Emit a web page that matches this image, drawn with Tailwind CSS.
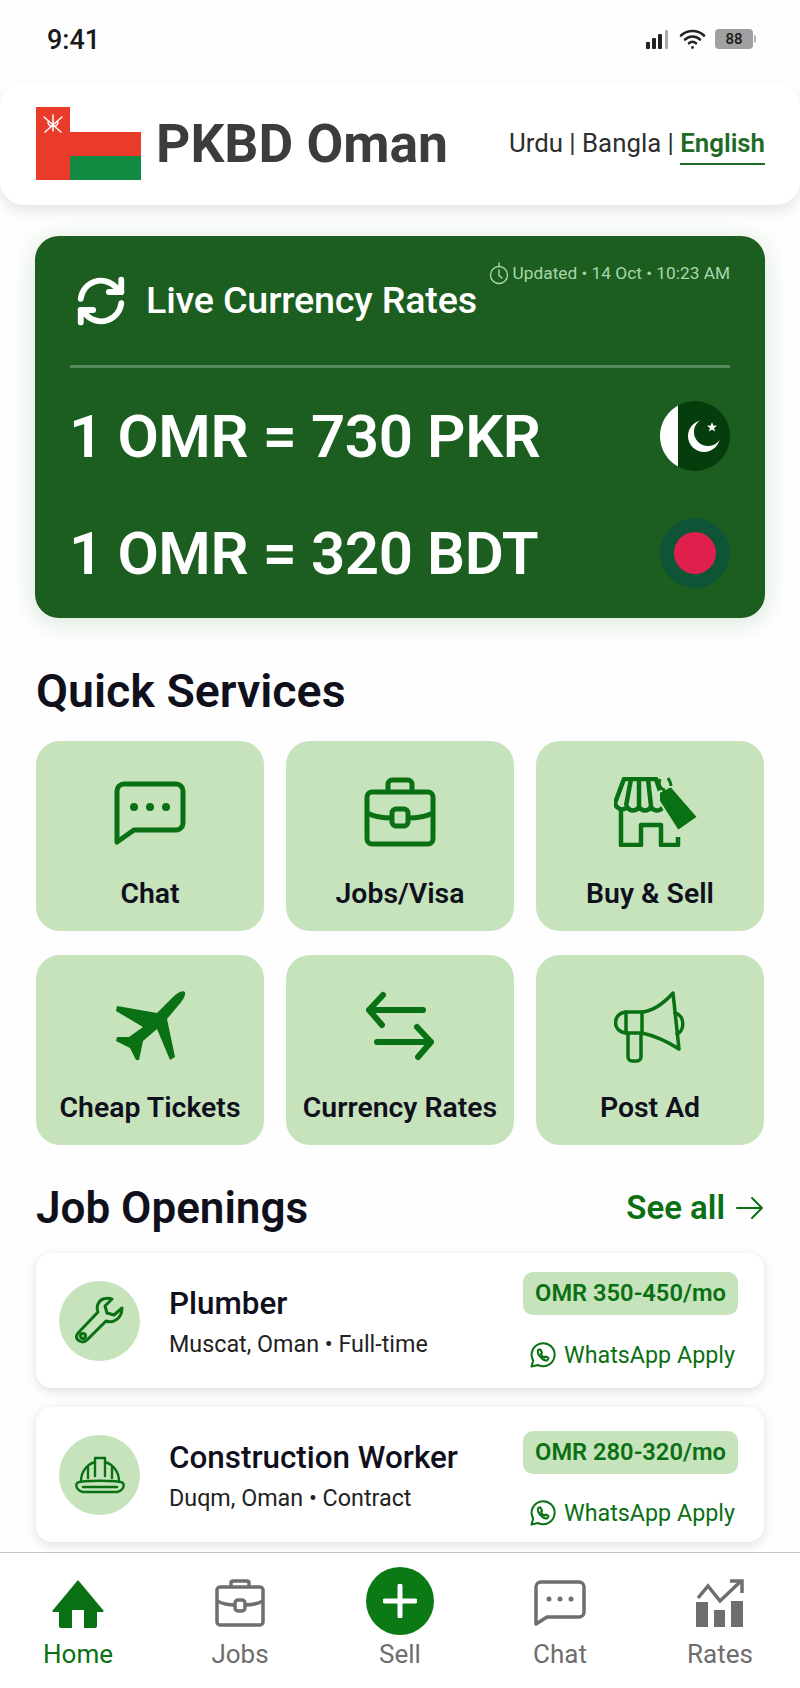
<!DOCTYPE html>
<html lang="en">

<head>
  <meta charset="UTF-8" />
  <meta name="viewport" content="width=device-width, initial-scale=1.0" />
  <title>PKBD Oman</title>
  <script src="https://cdn.jsdelivr.net/npm/@tailwindcss/browser@4"></script>
</head>

<body class="bg-[#fdfefd] font-['Roboto',sans-serif] text-[#10101c] antialiased">
  <div class="w-[800px] h-[1688px] overflow-hidden flex flex-col">

    <!-- Status bar -->
    <div class="h-[82px] shrink-0 flex items-start justify-between pl-[47px] pr-[44px] pt-[22px]">
      <span class="text-[27px] leading-[36px] font-medium text-[#1a1a1a]">9:41</span>
      <div class="flex items-center gap-[9px] mt-[6px]">
        <svg class="w-[25px] h-[20px]" viewBox="0 0 25 20" fill="#222">
          <rect x="1" y="13" width="4" height="7" rx="1" />
          <rect x="7" y="9" width="4" height="11" rx="1" />
          <rect x="13" y="5" width="4" height="15" rx="1" />
          <rect x="20" y="1" width="3" height="19" rx="1" fill="#aaa" />
        </svg>
        <svg class="w-[27px] h-[22px]" viewBox="0 0 26 22" fill="none" stroke="#222" stroke-width="2.6" stroke-linecap="round">
          <path d="M1.5 7.5C8 1.5 18 1.5 24.5 7.5" />
          <path d="M5.5 11.5c4.400-4 10.600-4 15 0" />
          <path d="M9.500 15.200c2.200-1.800 4.800-1.800 7 0" />
          <circle cx="13" cy="19.500" r="1.400" fill="#222" stroke="none" />
        </svg>
        <div class="flex items-center gap-[1px]">
          <div class="w-[38px] h-[20px] rounded-[4px] bg-[#a0a0a0] flex items-center justify-center text-[15px] font-medium text-[#1a1a1a]">88</div>
          <div class="w-[2px] h-[8px] rounded-r bg-[#b5b5b5]"></div>
        </div>
      </div>
    </div>

    <!-- App header -->
    <header class="h-[123px] shrink-0 bg-white rounded-[24px] shadow-[0_6px_14px_rgba(0,0,0,0.10)] flex items-center justify-between pl-[36px] pr-[35px]">
      <div class="flex items-center gap-[15px]">
        <svg class="w-[105px] h-[73px] mt-[-1px]" viewBox="0 0 105 73">
          <rect width="105" height="73" fill="#ea3b2a" />
          <rect x="34" width="71" height="25" fill="#fff" />
          <rect x="34" y="49" width="71" height="24" fill="#118a42" />
          <g stroke="#fff" stroke-width="1.500" fill="none" stroke-linecap="round">
            <path d="M8 10l17 15M26 10L9 25" />
            <path d="M17 8v16M12 15c0 6 10 6 10 0" />
          </g>
        </svg>
        <span class="text-[53.400px] leading-none font-bold text-[#3c3c3c]">PKBD Oman</span>
      </div>
      <div class="flex items-start text-[25.800px] leading-[36px] text-[#2e2e2e] mt-[2px]">
        <span class="whitespace-pre">Urdu | Bangla | </span>
        <span class="font-semibold text-[#1d6a25] border-b-2 border-[#1d6a25] pb-[2px]">English</span>
      </div>
    </header>

    <!-- Live rates -->
    <section class="h-[382px] shrink-0 mt-[31px] mx-[35px] bg-[#1b5e20] rounded-[24px] shadow-[0_4px_24px_rgba(27,94,32,0.16)] px-[35px] text-white">
      <div class="h-[132px] border-b-[3px] border-[#58895c] relative">
        <div class="absolute right-0 top-[25px] flex items-center gap-[4px] text-[17.300px] leading-[24px] text-[#a9d6ab]">
          <svg class="w-[20px] h-[23px]" viewBox="0 0 20 23" fill="none" stroke="#a9d6ab" stroke-width="1.400" stroke-linecap="round">
            <circle cx="10" cy="13" r="8.500" />
            <path d="M10 8v5.500l3 2.500M10 1v3" />
          </svg>
          <span>Updated • 14 Oct • 10:23 AM</span>
        </div>
        <div class="flex items-center gap-[18px] pt-[38px] pl-[4px]">
          <svg class="w-[54px] h-[54px]" viewBox="0 0 24 24" fill="none" stroke="#fff" stroke-width="2.600" stroke-linecap="round" stroke-linejoin="round">
            <path d="M3 11a9 9 0 0 1 15.500-5.200L21 8" />
            <path d="M21 2.500V8h-5.500" />
            <path d="M21 13a9 9 0 0 1-15.500 5.200L3 16" />
            <path d="M3 21.500V16h5.500" />
          </svg>
          <span class="text-[37.700px] leading-none font-medium tracking-[-0.2px]">Live Currency Rates</span>
        </div>
      </div>
      <div class="flex items-center justify-between mt-[33px]">
        <span class="text-[60px] leading-[70px] font-semibold tracking-[-0.4px] -ml-[1px] translate-y-[1px]">1 OMR = 730 PKR</span>
        <svg class="w-[70px] h-[70px]" viewBox="0 0 70 70">
          <circle cx="35" cy="35" r="35" fill="#053d0c" />
          <path d="M18 4.400A35 35 0 0 0 18 65.600Z" fill="#fff" />
          <circle cx="44" cy="35" r="16" fill="#fff" />
          <circle cx="48" cy="31" r="14" fill="#053d0c" />
          <path d="M52 21l1.300 3.500 3.700.2-2.900 2.300 1 3.600-3.100-2-3.100 2 1-3.600-2.900-2.300 3.700-.2Z" fill="#fff" />
        </svg>
      </div>
      <div class="flex items-center justify-between mt-[47px]">
        <span class="text-[60px] leading-[70px] font-semibold tracking-[-0.4px] -ml-[1px] translate-y-[1px]">1 OMR = 320 BDT</span>
        <svg class="w-[70px] h-[70px]" viewBox="0 0 70 70">
          <circle cx="35" cy="35" r="35" fill="#0d5536" />
          <circle cx="35" cy="35" r="21" fill="#e0204c" />
        </svg>
      </div>
    </section>

    <!-- Quick services -->
    <h2 class="mt-[48px] mx-[36px] text-[46.500px] leading-[50px] font-semibold">Quick Services</h2>
    <div class="mt-[25px] mx-[36px] grid grid-cols-3 gap-x-[22px] gap-y-[24px]">
      <div class="h-[190px] bg-[#c6e3bc] rounded-[24px] flex flex-col items-center">
        <svg class="w-[72px] h-[64px] mt-[40px]" viewBox="0 0 72 64" fill="none" stroke="#0a7014" stroke-width="5" stroke-linejoin="round">
          <path d="M3 10a7 7 0 0 1 7-7h52a7 7 0 0 1 7 7v32a7 7 0 0 1-7 7H20L3 61Z" />
          <circle cx="20" cy="26" r="4" fill="#0a7014" stroke="none" />
          <circle cx="36" cy="26" r="4" fill="#0a7014" stroke="none" />
          <circle cx="52" cy="26" r="4" fill="#0a7014" stroke="none" />
        </svg>
        <span class="mt-[33px] text-[28.400px] leading-[32px] font-semibold">Chat</span>
      </div>
      <div class="h-[190px] bg-[#c6e3bc] rounded-[24px] flex flex-col items-center">
        <svg class="w-[72px] h-[70px] mt-[36px]" viewBox="0 0 72 70" fill="none" stroke="#0a7014" stroke-width="5" stroke-linejoin="round">
          <path d="M24 15V7a4 4 0 0 1 4-4h16a4 4 0 0 1 4 4v8" />
          <rect x="3" y="15" width="66" height="52" rx="5" />
          <path d="M3 36c8 4 16 5 25 5M69 36c-8 4-16 5-25 5" />
          <rect x="28" y="32" width="16" height="17" rx="4" />
        </svg>
        <span class="mt-[31px] text-[28.400px] leading-[32px] font-semibold">Jobs/Visa</span>
      </div>
      <div class="h-[190px] bg-[#c6e3bc] rounded-[24px] flex flex-col items-center">
        <svg class="w-[84px] h-[70px] mt-[36px] ml-[12px]" viewBox="0 0 84 70" fill="none" stroke="#0a7014" stroke-width="4.500" stroke-linejoin="round">
          <path d="M10 2h32l8 24a7 7 0 0 1-13 4a7 7 0 0 1-12 0a7 7 0 0 1-12 0a7 7 0 0 1-12-4Z" />
          <path d="M17 2l-5 27M25 2v27M34 2l3 27" />
          <path d="M7 33v35h20V48h20v20h17v-8" />
          <path d="M45 15 57 9 84 40 64 54 45 24Z" fill="#0a7014" stroke="#c6e3bc" stroke-width="2" />
          <path d="M46 2c-2 5 0 10 5 11M54 1c2 3 3 5 3 8" stroke-width="3" />
        </svg>
        <span class="mt-[31px] text-[28.400px] leading-[32px] font-semibold">Buy &amp; Sell</span>
      </div>
      <div class="h-[190px] bg-[#c6e3bc] rounded-[24px] flex flex-col items-center">
        <svg class="w-[70px] h-[70px] mt-[36px]" viewBox="0 0 70 70" fill="#0a7014">
          <path d="M70 1C71 4 68 10 62 16L52 28 60 66 55 69 42 38 28 50 24 69H21L15 57 1 50 2 46H14L28 36 1 20 2 15 42 22 58 6C62 2 67-1 70 1Z" />
        </svg>
        <span class="mt-[31px] text-[28.400px] leading-[32px] font-semibold">Cheap Tickets</span>
      </div>
      <div class="h-[190px] bg-[#c6e3bc] rounded-[24px] flex flex-col items-center">
        <svg class="w-[70px] h-[70px] mt-[36px]" viewBox="0 0 70 70" fill="none" stroke="#0a7014" stroke-width="6" stroke-linecap="round" stroke-linejoin="round">
          <path d="M4 19h54M18 4 4 19l13 15" />
          <path d="M66 51H12M52 36l14 15-13 15" />
        </svg>
        <span class="mt-[31px] text-[28.400px] leading-[32px] font-semibold">Currency Rates</span>
      </div>
      <div class="h-[190px] bg-[#c6e3bc] rounded-[24px] flex flex-col items-center">
        <svg class="w-[72px] h-[72px] mt-[36px]" viewBox="0 0 72 72" fill="none" stroke="#0a7014" stroke-width="3.500" stroke-linejoin="round" stroke-linecap="round">
          <path d="M59 2C50 12 40 20 28 21H12v21h16c14 3 26 9 37 16Z" />
          <path d="M12 21C-2 22-2 41 12 42" />
          <path d="M28 21v21" />
          <path d="M14 42v24a4 4 0 0 0 4 4h5a4 4 0 0 0 4-4V44" />
          <path d="M61 22c10 2 10 18 2 21" />
        </svg>
        <span class="mt-[29px] text-[28.400px] leading-[32px] font-semibold">Post Ad</span>
      </div>
    </div>

    <!-- Job openings -->
    <div class="mt-[38px] mx-[36px] h-[50px] flex items-center justify-between">
      <h2 class="text-[44px] leading-[50px] font-semibold">Job Openings</h2>
      <div class="flex items-center gap-[11px] text-[#0a7014]">
        <span class="text-[33px] font-semibold leading-[40px]">See all</span>
        <svg class="w-[28px] h-[24px]" viewBox="0 0 28 24" fill="none" stroke="#0a7014" stroke-width="2" stroke-linecap="round" stroke-linejoin="round">
          <path d="M1 12h25M16 2l10 10-10 10" />
        </svg>
      </div>
    </div>

    <div class="mt-[20px] mx-[36px] h-[135px] shrink-0 bg-white rounded-[16px] shadow-[0_3px_12px_rgba(0,0,0,0.13)] flex items-center pl-[23px] pr-[26px] relative">
      <div class="w-[81px] h-[80px] rounded-full bg-[#c6e3bc] flex items-center justify-center shrink-0">
        <svg class="w-[50px] h-[50px]" viewBox="0 0 50 50" fill="none" stroke="#0a7014" stroke-width="3" stroke-linejoin="round">
          <path d="M28 3c-5 2-7 8-5 13L4 36c-3 3-3 6-1 8s6 3 9 0l19-19c5 2 11 0 14-5 2-3 2-6 2-8l-8 7-7-2-2-7 7-7c-2-1-5-1-9 0Z" />
          <circle cx="8" cy="40" r="2.500" />
        </svg>
      </div>
      <div class="ml-[29px] flex-1 pt-[2px]">
        <div class="text-[31.400px] leading-[36px] font-medium">Plumber</div>
        <div class="mt-[8px] text-[23.300px] leading-[28px] text-[#222]">Muscat, Oman • Full-time</div>
      </div>
      <div class="flex flex-col items-end self-start pt-[19px]">
        <div class="w-[215px] h-[43px] rounded-[10px] bg-[#c6e3bc] flex items-center justify-center text-[23.700px] font-semibold text-[#0a7014]">OMR 350-450/mo</div>
        <div class="mt-[26px] flex items-center gap-[8px] text-[23.300px] leading-[28px] text-[#0a7014] pr-[3px]">
          <svg class="w-[26px] h-[26px]" viewBox="0 0 26 26" fill="none" stroke="#0a7014" stroke-width="2" stroke-linejoin="round" stroke-linecap="round">
            <path d="M1.500 24.500l1.700-6A11.500 11.500 0 1 1 8 23Z" />
            <path d="M9 7.500c-2 1-1.500 4 1 7s5.500 4.500 7.500 3.500l1-2-3-1.500-1 1c-1.500-.5-3-2-3.500-3.500l1-1-1.500-3.500Z" />
          </svg>
          <span>WhatsApp Apply</span>
        </div>
      </div>
    </div>

    <div class="mt-[19px] mx-[36px] h-[135px] shrink-0 bg-white rounded-[16px] shadow-[0_3px_12px_rgba(0,0,0,0.13)] flex items-center pl-[23px] pr-[26px] relative">
      <div class="w-[81px] h-[80px] rounded-full bg-[#c6e3bc] flex items-center justify-center shrink-0">
        <svg class="w-[50px] h-[38px]" viewBox="0 0 50 38" fill="none" stroke="#0a7014" stroke-width="2.400" stroke-linejoin="round" stroke-linecap="round">
          <path d="M6 25c0-10 7-17 14-19V2h10v4c7 2 14 9 14 19" />
          <path d="M20 6v14M30 6v14M13 11v11M37 11v11" />
          <path d="M2 27c5-3 41-3 46 0 2 4-1 8-6 9H8c-5-1-8-5-6-9Z" />
          <path d="M8 31h34" />
        </svg>
      </div>
      <div class="ml-[29px] flex-1 pt-[2px]">
        <div class="text-[31.400px] leading-[36px] font-medium whitespace-nowrap">Construction Worker</div>
        <div class="mt-[8px] text-[23.300px] leading-[28px] text-[#222]">Duqm, Oman • Contract</div>
      </div>
      <div class="flex flex-col items-end self-start pt-[24px]">
        <div class="w-[215px] h-[43px] rounded-[10px] bg-[#c6e3bc] flex items-center justify-center text-[23.700px] font-semibold text-[#0a7014]">OMR 280-320/mo</div>
        <div class="mt-[25px] flex items-center gap-[8px] text-[23.300px] leading-[28px] text-[#0a7014] pr-[3px]">
          <svg class="w-[26px] h-[26px]" viewBox="0 0 26 26" fill="none" stroke="#0a7014" stroke-width="2" stroke-linejoin="round" stroke-linecap="round">
            <path d="M1.500 24.500l1.700-6A11.500 11.500 0 1 1 8 23Z" />
            <path d="M9 7.500c-2 1-1.500 4 1 7s5.500 4.500 7.500 3.500l1-2-3-1.500-1 1c-1.500-.5-3-2-3.500-3.500l1-1-1.500-3.500Z" />
          </svg>
          <span>WhatsApp Apply</span>
        </div>
      </div>
    </div>

    <!-- Bottom nav -->
    <nav class="mt-[10px] h-[136px] shrink-0 bg-white border-t border-[#c4c4c4] grid grid-cols-5 text-[26px] leading-[30px] text-[#6e6e6e]">
      <div class="flex flex-col items-center pt-[27px] pr-[4px] text-[#0a7014]">
        <svg class="w-[52px] h-[48px]" viewBox="0 0 52 48" fill="#0a7014">
          <path d="M26 0 51 30a1 1 0 0 1-1 2h-5v14a2 2 0 0 1-2 2H32V30H20v18H9a2 2 0 0 1-2-2V32H2a1 1 0 0 1-1-2Z" />
        </svg>
        <span class="mt-[11px]">Home</span>
      </div>
      <div class="flex flex-col items-center pt-[26px]">
        <svg class="w-[50px] h-[48px]" viewBox="0 0 50 48" fill="none" stroke="#6e6e6e" stroke-width="3.500" stroke-linejoin="round">
          <path d="M16 8V4a2 2 0 0 1 2-2h14a2 2 0 0 1 2 2v4" />
          <rect x="2" y="8" width="46" height="38" rx="3" />
          <path d="M2 22c6 3 12 4 18 4M48 22c-6 3-12 4-18 4" />
          <rect x="20" y="21" width="10" height="11" rx="3" />
        </svg>
        <span class="mt-[12px]">Jobs</span>
      </div>
      <div class="flex flex-col items-center pt-[14px]">
        <div class="w-[68px] h-[68px] rounded-full bg-[#0b7a14] flex items-center justify-center">
          <svg class="w-[34px] h-[34px]" viewBox="0 0 34 34" fill="none" stroke="#fff" stroke-width="5" stroke-linecap="round">
            <path d="M17 2v30M2 17h30" />
          </svg>
        </div>
        <span class="mt-[4px]">Sell</span>
      </div>
      <div class="flex flex-col items-center pt-[27px]">
        <svg class="w-[52px] h-[46px]" viewBox="0 0 52 46" fill="none" stroke="#6e6e6e" stroke-width="3.500" stroke-linejoin="round">
          <path d="M2 7a5 5 0 0 1 5-5h38a5 5 0 0 1 5 5v25a5 5 0 0 1-5 5H13L2 44Z" />
          <circle cx="15" cy="19" r="2.500" fill="#6e6e6e" stroke="none" />
          <circle cx="26" cy="19" r="2.500" fill="#6e6e6e" stroke="none" />
          <circle cx="37" cy="19" r="2.500" fill="#6e6e6e" stroke="none" />
        </svg>
        <span class="mt-[13px]">Chat</span>
      </div>
      <div class="flex flex-col items-center pt-[26px]">
        <svg class="w-[48px] h-[48px]" viewBox="0 0 48 48" fill="#6e6e6e">
          <path d="M2 19 12 7l12 15L44 3" fill="none" stroke="#6e6e6e" stroke-width="3.500" />
          <path d="M34 2h12v12" fill="none" stroke="#6e6e6e" stroke-width="3.500" />
          <rect y="23" width="12" height="25" />
          <rect x="18" y="31" width="11" height="17" />
          <rect x="35" y="22" width="12" height="26" />
        </svg>
        <span class="mt-[12px]">Rates</span>
      </div>
    </nav>
  </div>
</body>

</html>
